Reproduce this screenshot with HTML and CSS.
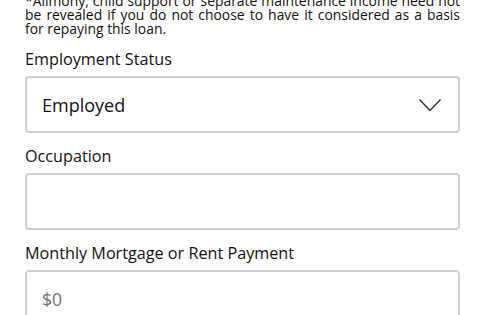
FILE: index.html
```html
<!DOCTYPE html>
<html>
<head>
<meta charset="utf-8">
<link rel="stylesheet" href="styles.css">
</head>
<body>
<div class="page">
  <p class="note">*Alimony, child support or separate maintenance income need not be revealed if you do not choose to have it considered as a basis for repaying this loan.</p>
  <div class="field">
    <div class="label">Employment Status</div>
    <div class="box select">
      <span class="value">Employed</span>
      <svg class="chev" width="24" height="14" viewBox="0 0 24 14"><path d="M1.5 1.5 L12 12.5 L22.5 1.5" fill="none" stroke="#333" stroke-width="1.4"/></svg>
    </div>
  </div>
  <div class="field">
    <div class="label">Occupation</div>
    <div class="box"></div>
  </div>
  <div class="field">
    <div class="label">Monthly Mortgage or Rent Payment</div>
    <div class="box"><span class="placeholder">$0</span></div>
  </div>
</div>
</body>
</html>
```

FILE: styles.css
```css
html, body {
  margin: 0;
  padding: 0;
  background: #fff;
  overflow: hidden;
}
.page {
  font-family: "Open Sans", "Noto Sans", sans-serif;
  color: #111;
  padding: 0 30px 0 25px;
  margin-top: -6px;
}
.note {
  margin: 0 0 12px;
  font-size: 13.9px;
  line-height: 14px;
  text-align: justify;
}
.field {
  margin-bottom: 12px;
}
.label {
  font-size: 16.2px;
  line-height: 22px;
  margin-bottom: 6px;
}
.box {
  box-sizing: border-box;
  height: 57px;
  border: 2px solid #cfcfcf;
  border-radius: 4px;
  display: flex;
  align-items: center;
  padding: 0 15px;
}
.select {
  justify-content: space-between;
  padding-right: 16px;
}
.value {
  font-size: 18px;
}
.placeholder {
  font-size: 17.5px;
  color: #6f7373;
}
.chev {
  display: block;
}
```
